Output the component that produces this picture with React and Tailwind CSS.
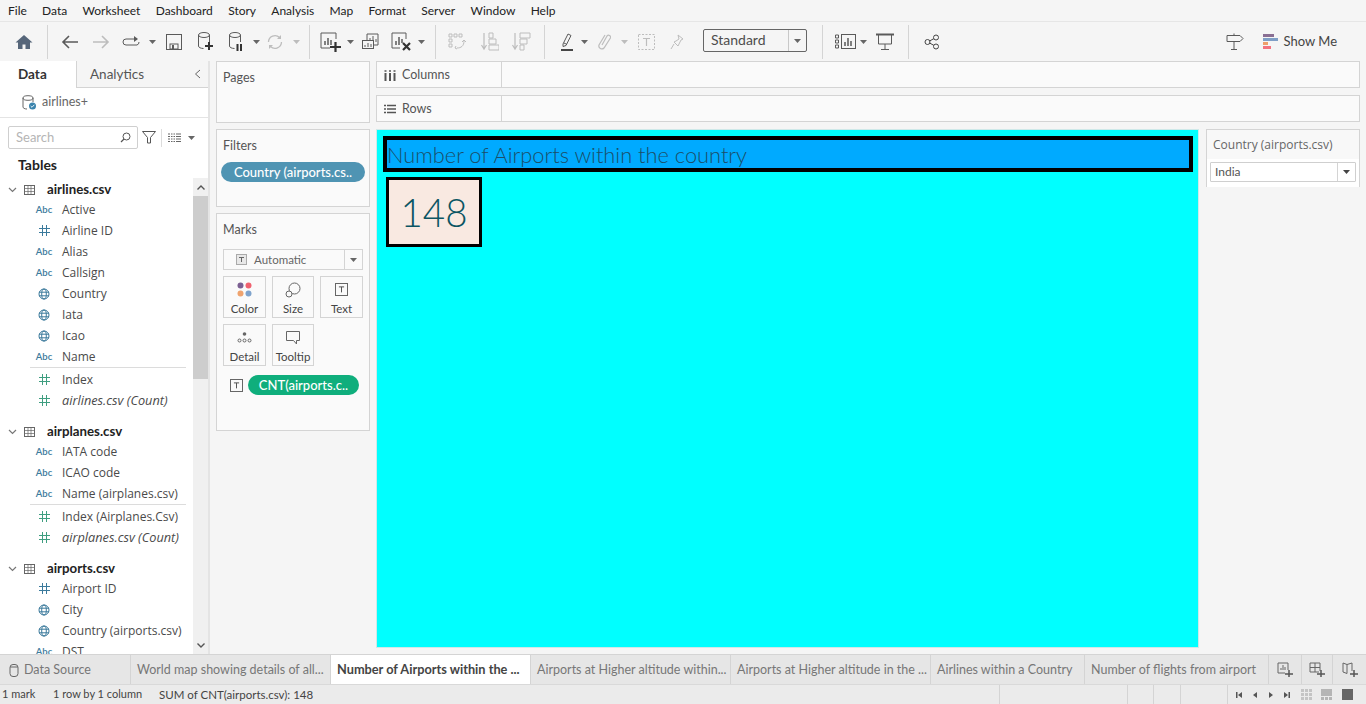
import React from 'react';

const menus = ['File', 'Data', 'Worksheet', 'Dashboard', 'Story', 'Analysis', 'Map', 'Format', 'Server', 'Window', 'Help'];

const tabs = [
  { label: 'World map showing details of all...', w: 'w-[200px]' },
  { label: 'Number of Airports within the ...', w: 'w-[200px]', active: true },
  { label: 'Airports at Higher altitude within...', w: 'w-[200px]' },
  { label: 'Airports at Higher altitude in the ...', w: 'w-[200px]' },
  { label: 'Airlines within a Country', w: 'w-[154px]' },
  { label: 'Number of flights from airport', w: 'w-[184px]' },
];

const tree = [
  {
    name: 'airlines.csv',
    dims: [['abc', 'Active'], ['hash', 'Airline ID'], ['abc', 'Alias'], ['abc', 'Callsign'], ['globe', 'Country'], ['globe', 'Iata'], ['globe', 'Icao'], ['abc', 'Name']],
    measures: ['Index', 'airlines.csv (Count)'],
  },
  {
    name: 'airplanes.csv',
    dims: [['abc', 'IATA code'], ['abc', 'ICAO code'], ['abc', 'Name (airplanes.csv)']],
    measures: ['Index (Airplanes.Csv)', 'airplanes.csv (Count)'],
  },
  {
    name: 'airports.csv',
    dims: [['hash', 'Airport ID'], ['globe', 'City'], ['globe', 'Country (airports.csv)'], ['abc', 'DST']],
    measures: [],
  },
];

function Icon({ w = 20, h = 20, children, className = '' }) {
  return (
    <svg width={w} height={h} viewBox={`0 0 ${w} ${h}`} fill="none" className={className}>
      {children}
    </svg>
  );
}

function Caret({ color = '#666' }) {
  return (
    <svg width="7" height="4" viewBox="0 0 7 4">
      <path d="M0 0h7L3.5 4z" fill={color} />
    </svg>
  );
}

function Cell({ w, children }) {
  return <div className={`${w} h-full flex items-center justify-center shrink-0`}>{children}</div>;
}

function Sep({ ml = '' }) {
  return <div className={`w-px h-[34px] bg-[#d4d4d4] shrink-0 ${ml}`} />;
}

function Toolbar() {
  const dark = '#5a5a5a';
  const off = '#bdbdbd';
  return (
    <div className="h-10 flex items-center bg-[#f5f5f5] border-t border-[#e6e6e6] shrink-0">
      <Cell w="w-[47px]">
        <Icon w={18} h={16}><path d="M9 1L0.5 8.5H3V15H7.5V10.5H10.5V15H15V8.5H17.5z" fill="#56667a" /></Icon>
      </Cell>
      <Sep />
      <Cell w="w-[18px] ml-[13px]">
        <Icon w={18} h={14}><path d="M17 7H2M8 1L2 7l6 6" stroke={dark} strokeWidth="1.6" /></Icon>
      </Cell>
      <Cell w="w-[18px] ml-[13px]">
        <Icon w={18} h={14}><path d="M1 7h15M10 1l6 6-6 6" stroke={off} strokeWidth="1.6" /></Icon>
      </Cell>
      <Cell w="w-[19px] ml-[12px]">
        <Icon w={19} h={12}><path d="M12 3H4a3 3 0 000 6h11a3 3 0 002-3" stroke={dark} strokeWidth="1" /><path d="M12 0v6l4-3z" fill={dark} /></Icon>
      </Cell>
      <Cell w="w-[7px] ml-[8px]"><Caret /></Cell>
      <Cell w="w-[16px] ml-[10px]">
        <Icon w={16} h={16}>
          <rect x=".5" y=".5" width="15" height="15" stroke={dark} />
          <rect x="4" y="10" width="8" height="5" stroke={dark} />
          <rect x="6" y="11" width="2" height="4" fill={dark} />
        </Icon>
      </Cell>
      <Cell w="w-[16px] ml-[16px]">
        <Icon w={16} h={19}>
          <ellipse cx="6" cy="3" rx="5.5" ry="2.5" stroke={dark} />
          <path d="M.5 3v11c0 1.4 2 2.4 5 2.5M11.500 3v7" stroke={dark} />
          <path d="M7 14h8M11 10v8" stroke="#333" strokeWidth="2" />
        </Icon>
      </Cell>
      <Cell w="w-[16px] ml-[15px]">
        <Icon w={16} h={19}>
          <ellipse cx="6" cy="3" rx="5.5" ry="2.5" stroke={dark} />
          <path d="M.5 3v11c0 1.4 2 2.4 5 2.500M11.500 3v7" stroke={dark} />
          <path d="M8.500 12v7M12 12v7" stroke="#333" strokeWidth="2" />
        </Icon>
      </Cell>
      <Cell w="w-[7px] ml-[8px]"><Caret /></Cell>
      <Cell w="w-[18px] ml-[6px]">
        <Icon w={18} h={16}>
          <path d="M2.500 8a6.500 6.500 0 0111-4.500M15.500 8a6.500 6.500 0 01-11 4.500" stroke={off} strokeWidth="1.300" />
          <path d="M15 1v4h-4zM3 15v-4h4z" fill={off} />
        </Icon>
      </Cell>
      <Cell w="w-[7px] ml-[9px]"><Caret color={off} /></Cell>
      <Sep ml="ml-[9px]" />
      <Cell w="w-[21px] ml-[10px]">
        <Icon w={21} h={20}>
          <path d="M16 7V1H1v15h9" stroke={dark} />
          <path d="M5 9v4M8 6v7M11 8v5" stroke={dark} strokeWidth="1.500" />
          <path d="M10 15h11M15.500 10v10" stroke="#333" strokeWidth="2.200" />
        </Icon>
      </Cell>
      <Cell w="w-[7px] ml-[6px]"><Caret /></Cell>
      <Cell w="w-[18px] ml-[7px]">
        <Icon w={18} h={18}>
          <path d="M6 7V1h11v11h-4" stroke={dark} />
          <path d="M9 7V5M12 9V3M15 9V6" stroke={dark} />
          <rect x="1.500" y="7.500" width="11" height="8" stroke={dark} fill="#f5f5f5" />
          <path d="M4 14v-2M7 14v-4M10 14v-3" stroke={dark} />
        </Icon>
      </Cell>
      <Cell w="w-[21px] ml-[12px]">
        <Icon w={21} h={19}>
          <path d="M15 7V1H1v15h8" stroke={dark} />
          <path d="M5 9v4M8 5v8M11 7v4" stroke={dark} strokeWidth="1.500" />
          <path d="M12 11l7 7M19 11l-7 7" stroke="#333" strokeWidth="2.200" />
        </Icon>
      </Cell>
      <Cell w="w-[7px] ml-[6px]"><Caret /></Cell>
      <Sep ml="ml-[10px]" />
      <Cell w="w-[19px] ml-[12px]">
        <Icon w={19} h={18}>
          <path d="M1 1h3v3H1zM6 1h3v3H6zM11 1h3v3h-3zM1 6h3v3H1zM1 11h3v3H1z" stroke={off} />
          <path d="M9 15c4 0 7-2 7-7M14 9l2-2 2 2M8 13l-1 2 2 1" stroke={off} />
        </Icon>
      </Cell>
      <Cell w="w-[18px] ml-[14px]">
        <Icon w={18} h={19}>
          <path d="M3 1v16M0.500 13L3 17l2.500-4" stroke={off} strokeWidth="1.200" />
          <path d="M8 1h4v5H8zM8 7h7v5H8zM8 13h10v5H8z" stroke={off} />
        </Icon>
      </Cell>
      <Cell w="w-[19px] ml-[13px]">
        <Icon w={19} h={19}>
          <path d="M3 1v16M0.500 13L3 17l2.500-4" stroke={off} strokeWidth="1.200" />
          <path d="M8 1h10v5H8zM8 7h7v5H8zM8 13h4v5H8z" stroke={off} />
        </Icon>
      </Cell>
      <Sep ml="ml-[13px]" />
      <Cell w="w-[14px] ml-[15px]">
        <Icon w={14} h={19}>
          <path d="M3 12L8 2l3 1.500-5 10-3 1z" stroke={dark} />
          <path d="M4 11l3 1.500" stroke={dark} />
          <path d="M1 18h12" stroke="#333" strokeWidth="1.800" />
        </Icon>
      </Cell>
      <Cell w="w-[7px] ml-[7px]"><Caret /></Cell>
      <Cell w="w-[13px] ml-[10px]">
        <Icon w={13} h={17}>
          <path d="M4 12L9 3a2 2 0 013.400 2L6 15a3 3 0 01-5-3L7 2" stroke={off} strokeWidth="1.200" />
        </Icon>
      </Cell>
      <Cell w="w-[7px] ml-[10px]"><Caret color={off} /></Cell>
      <Cell w="w-[17px] ml-[10px]">
        <Icon w={17} h={16}>
          <rect x=".5" y=".5" width="16" height="15" stroke={off} strokeDasharray="2 1.500" />
          <path d="M5 4.500h7M8.500 4.500V12" stroke={off} strokeWidth="1.200" />
        </Icon>
      </Cell>
      <Cell w="w-[14px] ml-[15px]">
        <Icon w={14} h={16}>
          <path d="M8 1l5 4-2 1-2 4-1 2-4-4 2-1 3-2zM4 10l-3 5" stroke={off} />
        </Icon>
      </Cell>
      <div className="ml-[19px] mb-[2px] w-[104px] h-[23px] flex border border-[#666] rounded-[2px] shrink-0">
        <span className="flex-1 pl-[7px] text-[14px] leading-[20px] text-[#4d4d4d]">Standard</span>
        <span className="w-[18px] border-l border-[#c8c8c8] flex items-center justify-center"><Caret /></span>
      </div>
      <Sep ml="ml-[15px]" />
      <Cell w="w-[21px] ml-[12px]">
        <Icon w={21} h={15}>
          <path d="M.5 1h3v3h-3zM.5 6h3v3h-3zM.5 11h3v3h-3z" stroke={dark} />
          <rect x="6.500" y=".5" width="14" height="14" stroke={dark} />
          <path d="M10 12V8M13 12V4M16 12V7" stroke={dark} strokeWidth="1.500" />
        </Icon>
      </Cell>
      <Cell w="w-[7px] ml-[4px]"><Caret /></Cell>
      <Cell w="w-[18px] ml-[9px]">
        <Icon w={18} h={17}>
          <path d="M0 1.500h18" stroke={dark} strokeWidth="2" />
          <path d="M2.500 2v9h13V2M9 11v5M5 16.500h8" stroke={dark} />
        </Icon>
      </Cell>
      <Sep ml="ml-[14px]" />
      <Cell w="w-[16px] ml-[15px]">
        <Icon w={16} h={16}>
          <circle cx="3.500" cy="8" r="2.500" stroke="#444" />
          <circle cx="12" cy="3.500" r="2.500" stroke="#444" />
          <circle cx="12" cy="12.500" r="2.500" stroke="#444" />
          <path d="M5.500 7l4.300-2.300M5.500 9l4.300 2.300" stroke="#444" />
        </Icon>
      </Cell>
      <div className="flex-1" />
      <Icon w={18} h={17} className="mr-[19px]">
        <path d="M1 2.500h13l3 3-3 3H1zM8 .5v2M8 8.500V16M5 16.500h6" stroke={dark} />
      </Icon>
      <svg width="15" height="16" viewBox="0 0 15 16" className="mr-[6px]">
        <rect x="0" y="0" width="11" height="3" fill="#8a6f93" />
        <rect x="0" y="4" width="15" height="3" fill="#7f9fc6" />
        <rect x="0" y="8" width="5" height="3" fill="#ee9f6a" />
        <rect x="0" y="12" width="8" height="3" fill="#f2737f" />
      </svg>
      <span className="text-[13px] text-[#444] mr-[29px]">Show Me</span>
    </div>
  );
}

function FieldIcon({ type, measure }) {
  if (type === 'abc') {
    return <span className="text-[9.500px] font-semibold text-[#3b7a9c] leading-none">Abc</span>;
  }
  if (type === 'globe') {
    return (
      <Icon w={12} h={12}>
        <circle cx="6" cy="6" r="5" stroke="#3b7a9c" />
        <ellipse cx="6" cy="6" rx="2.300" ry="5" stroke="#3b7a9c" />
        <path d="M1 4.200h10M1 7.800h10" stroke="#3b7a9c" />
      </Icon>
    );
  }
  const c = measure ? '#3f9e80' : '#3b7a9c';
  return (
    <Icon w={11} h={11}>
      <path d="M3.500 0v11M7.500 0v11M0 3.500h11M0 7.500h11" stroke={c} />
    </Icon>
  );
}

function Field({ type, label, measure, italic }) {
  return (
    <div className="h-[21px] flex items-center">
      <div className="w-[34px] ml-[27px] mr-[1px] flex justify-center shrink-0"><FieldIcon type={type} measure={measure} /></div>
      <span className={`font-['Open_Sans',sans-serif] text-[#4a4a4a] whitespace-nowrap ${italic ? 'italic text-[12.750px]' : 'text-[12px]'}`}>{label}</span>
    </div>
  );
}

function TableGroup({ group }) {
  return (
    <div className="mb-[9px]">
      <div className="h-[21px] flex items-center pt-[2px]">
        <Icon w={9} h={6} className="ml-[8px]"><path d="M1 1l3.500 3.500L8 1" stroke="#777" strokeWidth="1.200" /></Icon>
        <Icon w={11} h={10} className="ml-[7px]">
          <rect x=".5" y=".5" width="10" height="9" stroke="#666" />
          <path d="M0 3.500h11M0 6.500h11M4 1v9M7 1v9" stroke="#666" strokeWidth=".7" />
        </Icon>
        <span className="ml-[12px] text-[13.250px] font-bold text-[#222]">{group.name}</span>
      </div>
      {group.dims.map(([type, label]) => (
        <Field key={label} type={type} label={label} />
      ))}
      {group.measures.length > 0 && (
        <>
          <div className="h-px bg-[#dcdcdc] ml-[30px] w-[156px] mb-[1px]" />
          {group.measures.map((label, i) => (
            <Field key={label} type="hash" label={label} measure italic={i === group.measures.length - 1} />
          ))}
        </>
      )}
    </div>
  );
}

function DataPane() {
  return (
    <div className="w-[210px] bg-white border-r-[2px] border-[#e4e4e4] flex flex-col shrink-0 overflow-hidden">
      <div className="h-[27px] flex shrink-0">
        <div className="w-[77px] border-r border-[#d4d4d4] text-[13.500px] font-bold text-[#333] pl-[18px] leading-[26px]">Data</div>
        <div className="flex-1 border-b border-[#d4d4d4] bg-[#f5f5f5] flex items-center justify-between pl-[13px] pr-[7px]">
          <span className="text-[13.500px] text-[#555]">Analytics</span>
          <Icon w={7} h={10}><path d="M6 1L1.500 5 6 9" stroke="#666" /></Icon>
        </div>
      </div>
      <div className="h-[30px] flex items-center border-b border-[#e4e4e4] shrink-0 pl-[22px]">
        <Icon w={15} h={16}>
          <ellipse cx="6" cy="3" rx="5" ry="2.300" stroke="#666" />
          <path d="M1 3v9c0 1 1.500 2 4 2M11 3v4" stroke="#666" />
          <circle cx="10.500" cy="11" r="3.500" fill="#3b84ad" />
          <path d="M8.700 11l1.300 1.300 2.300-2.500" stroke="#fff" strokeWidth=".9" />
        </Icon>
        <span className="ml-[5px] text-[12.500px] text-[#666]">airlines+</span>
      </div>
      <div className="h-[23px] mt-[8px] flex items-center shrink-0 pl-[8px]">
        <div className="w-[130px] h-[23px] border border-[#cfcfcf] rounded-[2px] flex items-center justify-between pl-[7px] pr-[6px]">
          <span className="text-[13px] text-[#b5b5b5]">Search</span>
          <Icon w={11} h={11}><circle cx="6.500" cy="4.500" r="3.500" stroke="#555" /><path d="M4 7L1 10" stroke="#555" strokeWidth="1.300" /></Icon>
        </div>
        <Icon w={14} h={13} className="ml-[4px]"><path d="M.5.5h13L8.500 6.500V12l-3 0V6.500z" stroke="#555" /></Icon>
        <div className="w-px h-[18px] bg-[#dcdcdc] ml-[5px]" />
        <Icon w={13} h={10} className="ml-[6px]">
          <path d="M0 1h13M0 3.500h13M0 6h13M0 8.500h13" stroke="#666" />
          <path d="M2.500 0v10M5 0v10M7.500 0v10" stroke="#fff" />
        </Icon>
        <span className="ml-[7px]"><Caret /></span>
      </div>
      <div className="h-[25px] mt-[4px] pl-[18px] text-[14px] font-bold text-[#222] leading-[24px] shrink-0">Tables</div>
      <div className="flex-1 relative overflow-hidden">
        <div>
          {tree.map(g => <TableGroup key={g.name} group={g} />)}
        </div>
        <div className="absolute right-0 top-0 bottom-0 w-[15px] bg-[#f0f0f0] flex flex-col">
          <div className="h-[18px] flex items-center justify-center">
            <Icon w={8} h={5}><path d="M.5 4.500L4 1l3.500 3.500" stroke="#555" strokeWidth="1.400" /></Icon>
          </div>
          <div className="h-[183px] bg-[#cdcdcd]" />
          <div className="flex-1" />
          <div className="h-[17px] flex items-center justify-center">
            <Icon w={8} h={5}><path d="M.5.5L4 4 7.500.5" stroke="#555" strokeWidth="1.400" /></Icon>
          </div>
        </div>
      </div>
    </div>
  );
}

function Card({ title, className, children }) {
  return (
    <div className={`border border-[#d4d4d4] bg-[#fafafa] px-[6px] ${className}`}>
      <div className="text-[12.500px] text-[#555] pt-[8px] leading-[16px]">{title}</div>
      {children}
    </div>
  );
}

function MarkButton({ label, children }) {
  return (
    <div className="h-[42px] border border-[#d4d4d4] flex flex-col items-center">
      <div className="h-[25px] flex items-center justify-center">{children}</div>
      <span className="text-[11.500px] text-[#444] leading-[14px]">{label}</span>
    </div>
  );
}

function TBox({ size = 13 }) {
  return (
    <Icon w={size} h={size}>
      <rect x=".5" y=".5" width={size - 1} height={size - 1} stroke="#666" />
      <path d={`M${size * 0.3} ${size * 0.3}h${size * 0.4}M${size / 2} ${size * 0.3}v${size * 0.42}`} stroke="#555" />
    </Icon>
  );
}

function SideCards() {
  return (
    <div className="w-[154px] ml-[6px] flex flex-col gap-[6px] shrink-0">
      <Card title="Pages" className="h-[62px]" />
      <Card title="Filters" className="h-[78px]">
        <div className="-mx-[2px] mt-[8px] h-[20px] w-[144px] rounded-full bg-[#4f94b3] text-white text-[13px] font-medium leading-[20px] text-center whitespace-nowrap">
          Country (airports.cs..
        </div>
      </Card>
      <Card title="Marks" className="h-[218px]">
        <div className="mt-[11px] h-[21px] border border-[#d4d4d4] flex items-center bg-[#fafafa]">
          <div className="flex-1 flex items-center pl-[12px] gap-[7px]">
            <Icon w={11} h={11}><rect x=".5" y=".5" width="10" height="10" fill="#e8e8e8" stroke="#aaa" /><path d="M3 3.500h5M5.500 3.500V8" stroke="#666" /></Icon>
            <span className="text-[11.500px] text-[#666]">Automatic</span>
          </div>
          <span className="w-[18px] h-full border-l border-[#d4d4d4] flex items-center justify-center"><Caret /></span>
        </div>
        <div className="mt-[6px] grid grid-cols-[43px_42px_43px] gap-[6px]">
          <MarkButton label="Color">
            <svg width="15" height="15" viewBox="0 0 15 15">
              <circle cx="3.500" cy="3.500" r="3" fill="#7b5f92" />
              <circle cx="11.500" cy="3.500" r="3" fill="#f0616f" />
              <circle cx="3.500" cy="11.500" r="3" fill="#efa36e" />
              <circle cx="11.500" cy="11.500" r="3" fill="#7fa3cc" />
            </svg>
          </MarkButton>
          <MarkButton label="Size">
            <Icon w={16} h={16}>
              <circle cx="9.500" cy="6.500" r="5.500" stroke="#666" />
              <circle cx="4" cy="12" r="3" stroke="#666" fill="#fafafa" />
            </Icon>
          </MarkButton>
          <MarkButton label="Text"><TBox /></MarkButton>
          <MarkButton label="Detail">
            <Icon w={15} h={11}>
              <circle cx="7.500" cy="2" r="1.800" fill="#666" />
              <circle cx="2.500" cy="8.500" r="1.500" stroke="#666" />
              <circle cx="7.500" cy="8.500" r="1.500" stroke="#666" />
              <circle cx="12.500" cy="8.500" r="1.500" stroke="#666" />
            </Icon>
          </MarkButton>
          <MarkButton label="Tooltip">
            <Icon w={14} h={14}><path d="M.5.5h13v9h-3v3.500l-3-3.500H.5z" stroke="#666" /></Icon>
          </MarkButton>
        </div>
        <div className="mt-[9px] flex items-center pl-[7px]">
          <TBox />
          <div className="ml-[5px] w-[111px] h-[20px] rounded-full bg-[#0fae7c] text-white text-[13px] font-medium leading-[20px] text-center whitespace-nowrap">
            CNT(airports.c..
          </div>
        </div>
      </Card>
    </div>
  );
}

function Shelf({ label, icon }) {
  return (
    <div className="h-[27px] border border-[#d4d4d4] bg-[#fafafa] flex items-center shrink-0">
      <div className="w-[125px] h-full border-r border-[#d4d4d4] flex items-center pl-[7px] gap-[6px] pt-[1px]">
        {icon}
        <span className="text-[12.500px] text-[#555]">{label}</span>
      </div>
    </div>
  );
}

function CenterArea() {
  return (
    <div className="flex-1 ml-[6px] mr-[6px] flex flex-col gap-[7px]">
      <Shelf
        label="Columns"
        icon={<Icon w={12} h={11}><path d="M1.500 3v8M6 3v8M10.500 3v8" stroke="#555" strokeWidth="2" /><path d="M.5 1h2M5 1h2M9.500 1h2" stroke="#555" strokeWidth="1.500" /></Icon>}
      />
      <Shelf
        label="Rows"
        icon={<Icon w={12} h={10}><path d="M3 1.500h9M3 5h9M3 8.500h9M0 1.500h2M0 5h2M0 8.500h2" stroke="#555" strokeWidth="1.500" /></Icon>}
      />
      <div className="flex flex-1 gap-[7px]">
        <div className="w-[823px] h-[519px] bg-[#00ffff] border border-[#cfe9e9] pt-[6px] pl-[6px] pr-[5px] shrink-0">
          <div className="h-[36px] border-[4px] border-black bg-[#00aaff] flex items-center pt-[3px]">
            <span className="text-[21.800px] font-light text-[#1c4e68] whitespace-nowrap">Number of Airports within the country</span>
          </div>
          <div className="mt-[5px] ml-[3px] w-[96px] h-[70px] border-[3px] border-black bg-[#f9e9e1] flex items-center justify-center">
            <span className="text-[38.500px] font-light text-[#0b5563] leading-none">148</span>
          </div>
        </div>
        <div className="w-[154px] h-[58px] border border-[#d4d4d4] bg-[#f8f8f8] shrink-0">
          <div className="h-[29px] pl-[6px] font-['Open_Sans',sans-serif] text-[12px] text-[#666] leading-[30px]">Country (airports.csv)</div>
          <div className="h-[28px] bg-white px-[3px] pt-[3px]">
            <div className="h-[20px] border border-[#cfcfcf] rounded-[1px] flex items-center">
              <span className="flex-1 pl-[4px] text-[12px] text-[#555]">India</span>
              <span className="w-[18px] h-full border-l border-[#d4d4d4] flex items-center justify-center"><Caret color="#444" /></span>
            </div>
          </div>
        </div>
      </div>
    </div>
  );
}

function TabBar() {
  return (
    <div className="h-[30px] flex bg-[#e6e6e6] border-t border-[#d4d4d4] shrink-0">
      <div className="w-[131px] border-r border-[#d4d4d4] flex items-center pl-[9px] gap-[5px] pt-[2px]">
        <Icon w={10} h={13}><rect x="1" y=".5" width="8" height="12" rx="3" stroke="#666" /><path d="M1 3h8" stroke="#666" /></Icon>
        <span className="text-[12.500px] text-[#777]">Data Source</span>
      </div>
      {tabs.map(t => (
        <div
          key={t.label}
          className={`${t.w} border-r border-[#d4d4d4] pl-[6px] flex items-center whitespace-nowrap overflow-hidden ${t.active ? 'bg-white text-[#444] font-bold text-[12.750px]' : 'text-[#777] text-[12.500px] pt-[2px]'}`}
        >
          {t.label}
        </div>
      ))}
      <div className="w-[33px] border-r border-[#d4d4d4] flex items-center justify-center">
        <Icon w={16} h={15}><path d="M11 8V1H1v10h7" stroke="#666" /><path d="M4 8V6M6 8V3M8 8V5" stroke="#666" /><path d="M8 12h8M12 8v7" stroke="#555" strokeWidth="1.500" /></Icon>
      </div>
      <div className="w-[31px] border-r border-[#d4d4d4] flex items-center justify-center">
        <Icon w={16} h={15}><path d="M10 10H1V1h10v8M6 1v9M1 5.500h10" stroke="#666" /><path d="M8 12h8M12 8v7" stroke="#555" strokeWidth="1.500" /></Icon>
      </div>
      <div className="flex-1 flex items-center justify-center">
        <Icon w={16} h={15}><path d="M1 1l4 1.500L10 1v8M1 1v9l4 1.500M5 2.500v9" stroke="#666" /><path d="M8 12h8M12 8v7" stroke="#555" strokeWidth="1.500" /></Icon>
      </div>
    </div>
  );
}

function StatusBar() {
  return (
    <div className="h-5 flex items-center bg-[#ebebeb] border-t border-[#d9d9d9] text-[11px] text-[#444] shrink-0">
      <span className="w-[53px] pl-[2px]">1 mark</span>
      <span className="w-[106px]">1 row by 1 column</span>
      <span className="w-[840px] text-[11.500px]">SUM of CNT(airports.csv): 148</span>
      <div className="w-[128px] h-full border-l border-[#d4d4d4]" />
      <div className="w-[26px] h-full border-l border-[#d4d4d4]" />
      <div className="w-[27px] h-full border-l border-[#d4d4d4]" />
      <div className="w-[47px] h-full border-l border-[#d4d4d4]" />
      <div className="flex-1 h-full border-l border-[#d4d4d4] flex items-center pl-[8px]">
        <svg width="54" height="8" viewBox="0 0 54 8" className="mr-[11px]">
          <path d="M0 1h1.500v6H0zM6 1v6L2 4zM21 1v6l-4-3zM33 1v6l4-3zM48 1v6l4-3zM52.500 1H54v6h-1.500z" fill="#555" />
        </svg>
        <svg width="11" height="11" viewBox="0 0 11 11" className="mr-[9px]">
          <path d="M0 0h3v3H0zM4 0h3v3H4zM8 0h3v3H8zM0 4h3v3H0zM4 4h3v3H4zM8 4h3v3H8zM0 8h3v3H0zM4 8h3v3H4zM8 8h3v3H8z" fill="#c4c4c4" />
        </svg>
        <svg width="11" height="11" viewBox="0 0 11 11" className="mr-[10px]">
          <path d="M0 0h11v7H0zM0 8h3v3H0zM4 8h3v3H4zM8 8h3v3H8z" fill="#b5b5b5" />
        </svg>
        <div className="w-[11px] h-[11px] bg-[#666]" />
      </div>
    </div>
  );
}

export default function App() {
  return (
    <div className="w-[1366px] h-[704px] flex flex-col overflow-hidden bg-[#f5f5f5] font-['Lato','Liberation_Sans',sans-serif]">
      <div className="h-[21px] flex items-center bg-[#f5f5f5] shrink-0 pl-[8px] gap-[15.300px] text-[12px] text-[#222]">
        {menus.map(m => <span key={m}>{m}</span>)}
      </div>
      <Toolbar />
      <div className="flex-1 flex min-h-0 overflow-hidden">
        <DataPane />
        <div className="flex flex-1 pb-[6px]">
          <SideCards />
          <CenterArea />
        </div>
      </div>
      <TabBar />
      <StatusBar />
    </div>
  );
}
